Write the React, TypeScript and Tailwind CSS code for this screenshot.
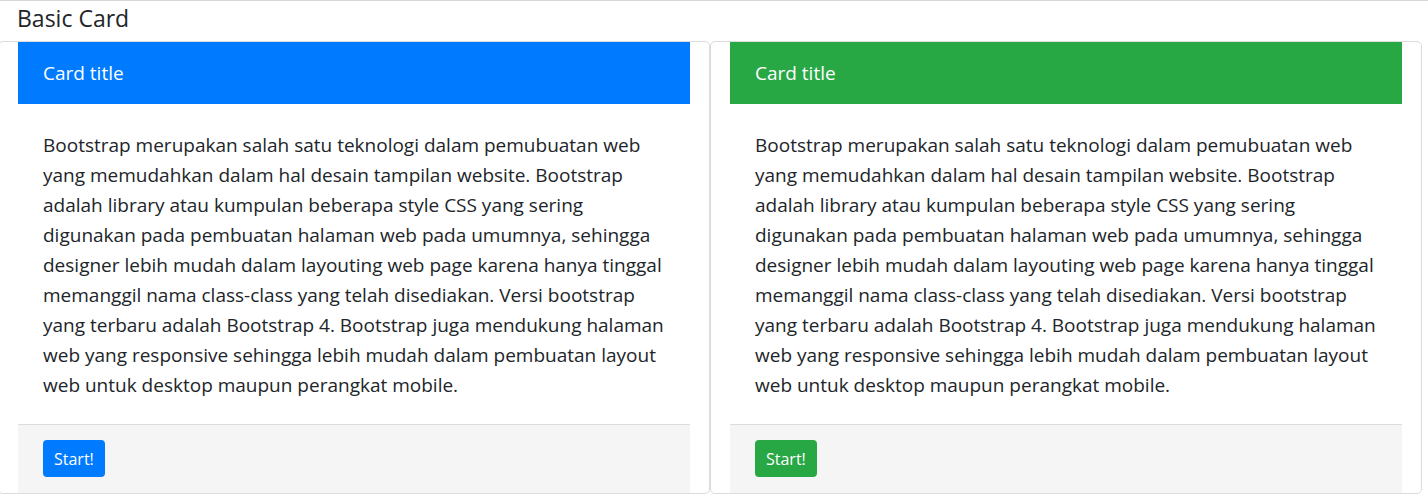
const lines = [
  "Bootstrap merupakan salah satu teknologi dalam pemubuatan web",
  "yang memudahkan dalam hal desain tampilan website. Bootstrap",
  "adalah library atau kumpulan beberapa style CSS yang sering",
  "digunakan pada pembuatan halaman web pada umumnya, sehingga",
  "designer lebih mudah dalam layouting web page karena hanya tinggal",
  "memanggil nama class-class yang telah disediakan. Versi bootstrap",
  "yang terbaru adalah Bootstrap 4. Bootstrap juga mendukung halaman",
  "web yang responsive sehingga lebih mudah dalam pembuatan layout",
  "web untuk desktop maupun perangkat mobile.",
];

const Card = ({ head, btn }: { head: string; btn: string }) => (
  <div className="w-[712px] shrink-0 border border-[#dcdcdc] rounded-[5px] px-[19px]">
    <div className={`${head} h-[62px] flex items-center px-[25px] text-white text-[19px]`}>
      Card title
    </div>
    <div className="px-[25px] pt-[26px] pb-[24px] text-[19px] leading-[30px] text-[#212529]">
      {lines.map((l, i) => (
        <div key={i} className="whitespace-nowrap">
          {l}
        </div>
      ))}
    </div>
    <div className="bg-[#f5f5f5] border-t border-[#dcdcdc] px-[25px] pt-[15px] pb-[16px]">
      <button className={`${btn} h-[37px] px-[11px] rounded-[4px] text-white text-[16px]`}>
        Start!
      </button>
    </div>
  </div>
);

export default function App() {
  return (
    <div className="w-[1428px] h-[499px] bg-white border-t border-[#d6d6d6] overflow-hidden font-['Open_Sans',sans-serif]">
      <h1 className="pl-[17px] h-[40px] pb-[5px] flex items-center text-[23px] text-[#212529]">Basic Card</h1>
      <div className="flex ml-[-2px]">
        <Card head="bg-[#007bff]" btn="bg-[#007bff]" />
        <Card head="bg-[#28a745]" btn="bg-[#28a745]" />
      </div>
    </div>
  );
}
